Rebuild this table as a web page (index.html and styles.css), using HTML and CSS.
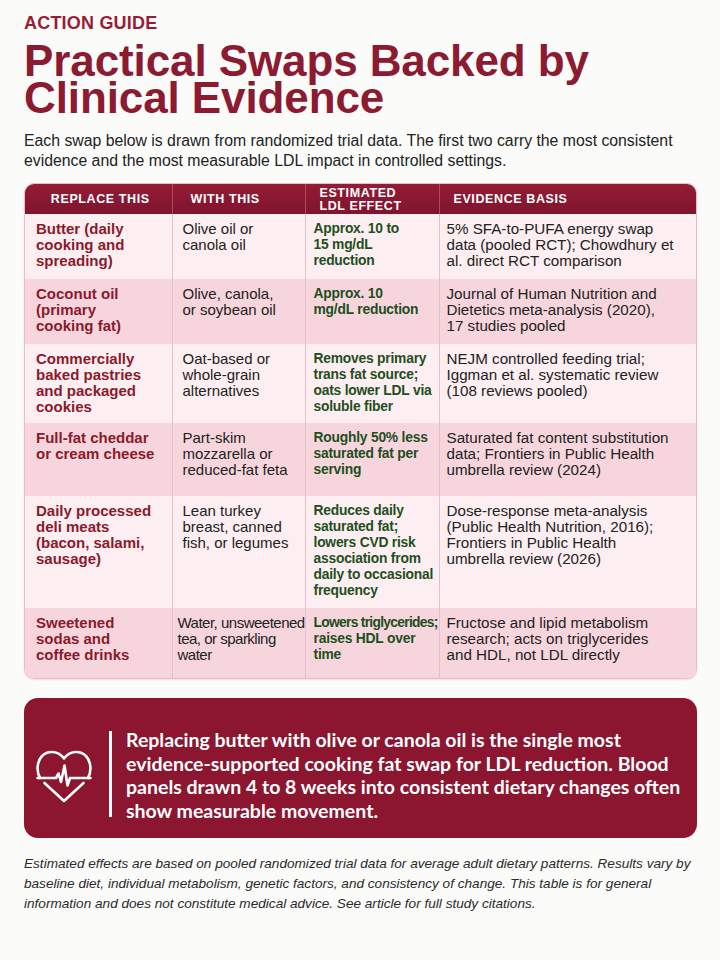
FILE: index.html
```html
<!DOCTYPE html>
<html lang="en">
<head>
<meta charset="utf-8">
<title>Practical Swaps Backed by Clinical Evidence</title>
<link rel="stylesheet" href="styles.css">
</head>
<body>
<main class="page">
  <div class="eyebrow">ACTION GUIDE</div>
  <h1 class="title">Practical Swaps Backed by<br>Clinical Evidence</h1>
  <p class="intro">Each swap below is drawn from randomized trial data. The first two carry the most consistent evidence and the most measurable LDL impact in controlled settings.</p>

  <div class="table-wrap">
    <table class="swaps">
      <colgroup>
        <col class="c1"><col class="c2"><col class="c3"><col class="c4">
      </colgroup>
      <thead>
        <tr>
          <th class="h-center">REPLACE THIS</th>
          <th class="h2">WITH THIS</th>
          <th class="h3">ESTIMATED<br>LDL EFFECT</th>
          <th class="h4">EVIDENCE BASIS</th>
        </tr>
      </thead>
      <tbody>
        <tr class="odd r1">
          <td class="food">Butter (daily<br>cooking and<br>spreading)</td>
          <td class="alt">Olive oil or<br>canola oil</td>
          <td class="effect">Approx. 10 to<br>15 mg/dL<br>reduction</td>
          <td class="basis">5% SFA-to-PUFA energy swap<br>data (pooled RCT); Chowdhury et<br>al. direct RCT comparison</td>
        </tr>
        <tr class="even r2">
          <td class="food">Coconut oil<br>(primary<br>cooking fat)</td>
          <td class="alt">Olive, canola,<br>or soybean oil</td>
          <td class="effect">Approx. 10<br>mg/dL reduction</td>
          <td class="basis">Journal of Human Nutrition and<br>Dietetics meta-analysis (2020),<br>17 studies pooled</td>
        </tr>
        <tr class="odd r3">
          <td class="food">Commercially<br>baked pastries<br>and packaged<br>cookies</td>
          <td class="alt">Oat-based or<br>whole-grain<br>alternatives</td>
          <td class="effect">Removes primary<br>trans fat source;<br>oats lower LDL via<br>soluble fiber</td>
          <td class="basis">NEJM controlled feeding trial;<br>Iggman et al. systematic review<br>(108 reviews pooled)</td>
        </tr>
        <tr class="even r4">
          <td class="food">Full-fat cheddar<br>or cream cheese</td>
          <td class="alt">Part-skim<br>mozzarella or<br>reduced-fat feta</td>
          <td class="effect">Roughly 50% less<br>saturated fat per<br>serving</td>
          <td class="basis">Saturated fat content substitution<br>data; Frontiers in Public Health<br>umbrella review (2024)</td>
        </tr>
        <tr class="odd r5">
          <td class="food">Daily processed<br>deli meats<br>(bacon, salami,<br>sausage)</td>
          <td class="alt">Lean turkey<br>breast, canned<br>fish, or legumes</td>
          <td class="effect">Reduces daily<br>saturated fat;<br>lowers CVD risk<br>association from<br>daily to occasional<br>frequency</td>
          <td class="basis">Dose-response meta-analysis<br>(Public Health Nutrition, 2016);<br>Frontiers in Public Health<br>umbrella review (2026)</td>
        </tr>
        <tr class="even r6">
          <td class="food">Sweetened<br>sodas and<br>coffee drinks</td>
          <td class="alt squeeze">Water, unsweetened<br>tea, or sparkling<br>water</td>
          <td class="effect"><span class="squeeze-b">Lowers triglycerides;</span><br>raises HDL over<br>time</td>
          <td class="basis">Fructose and lipid metabolism<br>research; acts on triglycerides<br>and HDL, not LDL directly</td>
        </tr>
      </tbody>
    </table>
  </div>

  <section class="callout">
    <svg class="heart" viewBox="0 0 56 56" width="56" height="56" aria-hidden="true">
      <g fill="none" stroke="#fff" stroke-width="2.6" stroke-linecap="round" stroke-linejoin="round">
        <path d="M4 31 C0.5 25 0.5 15 6 9 C12 3 22 3.5 28 11.5 C34 3.5 44 3 50 9 C55.5 15 55.5 25 52 31"/>
        <path d="M1.5 31 H20 L22.5 26.5 L25 35 L28.5 18.5 L31.5 38.5 L34 31 H54.5"/>
        <path d="M8.5 36 L28 54 L47.5 36"/>
      </g>
    </svg>
    <div class="divider"></div>
    <p class="callout-text">Replacing butter with olive or canola oil is the single most evidence-supported cooking fat swap for LDL reduction. Blood panels drawn 4 to 8 weeks into consistent dietary changes often show measurable movement.</p>
  </section>

  <p class="note">Estimated effects are based on pooled randomized trial data for average adult dietary patterns. Results vary by<br>baseline diet, individual metabolism, genetic factors, and consistency of change. This table is for general<br>information and does not constitute medical advice. See article for full study citations.</p>
</main>
</body>
</html>
```

FILE: styles.css
```css
html, body {
  margin: 0;
  padding: 0;
  background: #fbfbfa;
}

.page {
  padding: 14px 23px 0 24px;
  font-family: "Liberation Sans", Arial, sans-serif;
  color: #222;
}

.eyebrow {
  font-weight: 700;
  font-size: 18px;
  line-height: 18px;
  color: #9b1b34;
  letter-spacing: 0.2px;
}

.title {
  margin: 10px 0 0;
  font-weight: 700;
  font-size: 44px;
  line-height: 37px;
  color: #8c1a30;
  letter-spacing: -0.1px;
}

.intro {
  margin: 15px 0 0;
  font-size: 15.8px;
  line-height: 20px;
  color: #222;
}

.table-wrap {
  margin-top: 12px;
  border-radius: 10px;
  overflow: hidden;
  border: 1px solid #e9bcc6;
  box-shadow: 0 1px 2px rgba(120, 20, 40, 0.12);
}

.swaps {
  width: 100%;
  border-collapse: collapse;
  table-layout: fixed;
}

.c1 { width: 147px; }
.c2 { width: 133px; }
.c3 { width: 134px; }
.c4 { width: auto; }

.swaps th {
  background: linear-gradient(#941b36, #7f142d);
  color: #fff;
  font-weight: 700;
  font-size: 12.5px;
  line-height: 13px;
  letter-spacing: 0.6px;
  text-align: left;
  height: 29px;
  padding: 1px 8px 0 10px;
  border-left: 1px solid #ad4a5f;
}

.swaps th:first-child {
  border-left: none;
}

.swaps th.h-center {
  text-align: center;
  padding-left: 4px;
  padding-right: 0;
}

.swaps th.h2 {
  padding-left: 18px;
}

.swaps th.h3 {
  padding-left: 14px;
}

.swaps th.h4 {
  padding-left: 14px;
}

.swaps td {
  vertical-align: top;
  padding: 7px 4px 8px 10px;
  font-size: 15px;
  line-height: 16px;
  white-space: nowrap;
  border-left: 1px solid #e4c1c8;
}

.swaps td:first-child {
  border-left: none;
  padding-left: 11px;
}

.swaps tr.odd td {
  background: #fdeef1;
}

.swaps tr.even td {
  background: #f7d5dc;
}

.r1 { height: 65px; }
.r2 { height: 65px; }
.r3 { height: 79px; }
.r4 { height: 73px; }
.r5 { height: 112px; }
.r6 { height: 70px; }

.food {
  font-weight: 700;
  color: #8a1a2c;
}

.alt {
  color: #222;
}

.swaps td.effect {
  font-weight: 700;
  color: #1d4f1e;
  font-size: 13.8px;
  letter-spacing: -0.2px;
  padding-left: 8px;
  padding-right: 2px;
}

.swaps td.basis {
  font-size: 15.2px;
  color: #222;
  padding-left: 7px;
}

.swaps td.squeeze {
  padding-left: 5px;
  letter-spacing: -0.5px;
}

.squeeze-b {
  letter-spacing: -0.7px;
}

.callout {
  margin-top: 19px;
  background: #8c1530;
  border-radius: 14px;
  display: flex;
  align-items: center;
  padding: 30px 4px 16px 12px;
  color: #fff;
}

.heart {
  flex: none;
  width: 56px;
  height: 56px;
}

.divider {
  flex: none;
  width: 3px;
  align-self: stretch;
  background: #fff;
  margin: 3px 14px 5px 17px;
}

.callout-text {
  margin: 0;
  font-family: Lato, "Open Sans", sans-serif;
  font-weight: 700;
  font-size: 19.5px;
  line-height: 23.5px;
}

.note {
  margin: 16px 0 0;
  font-style: italic;
  font-size: 13.6px;
  line-height: 20px;
  color: #2a2a2a;
}
```
